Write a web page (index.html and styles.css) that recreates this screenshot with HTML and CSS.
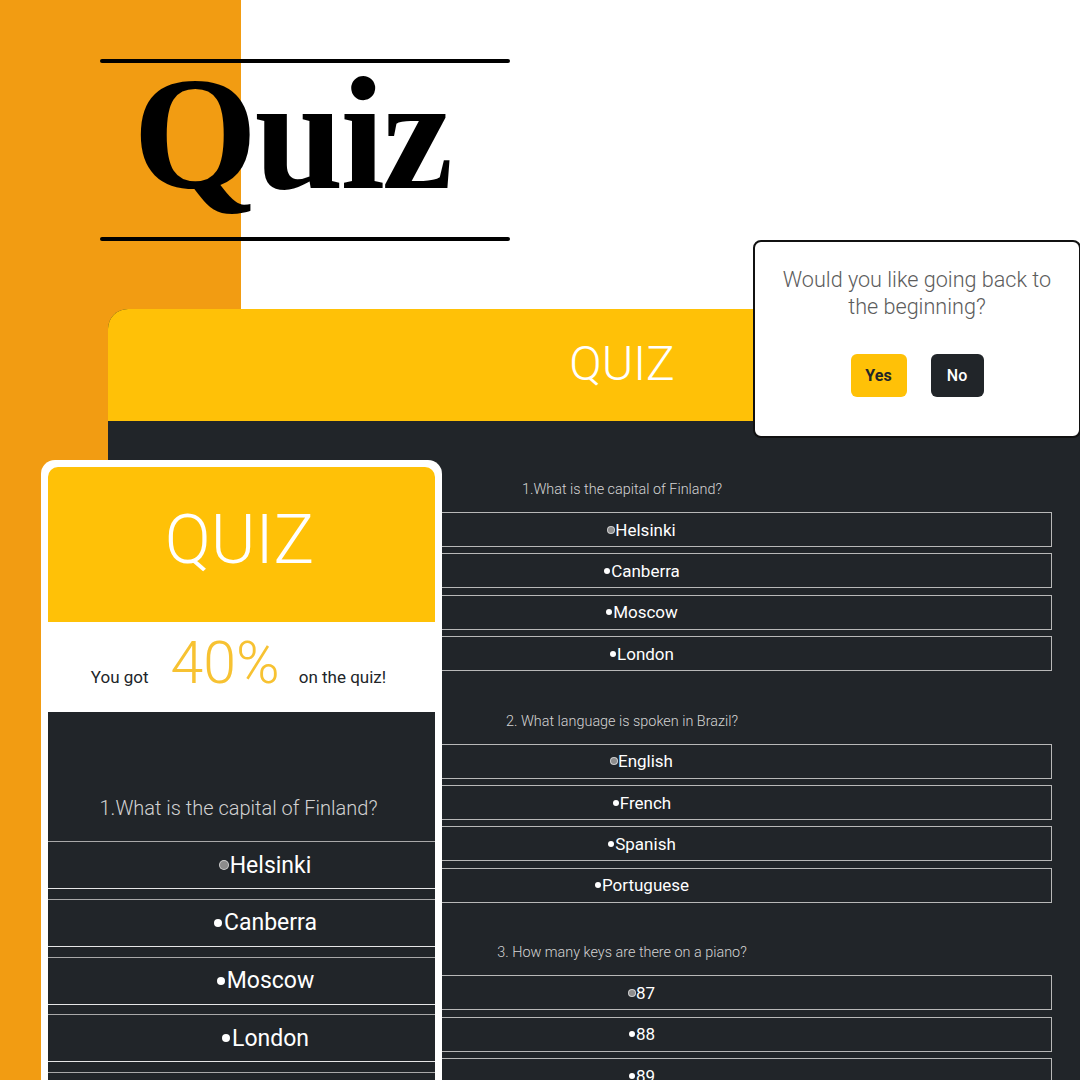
FILE: index.html
```html
<!DOCTYPE html>
<html lang="en">
<head>
<meta charset="utf-8">
<title>Quiz</title>
<link rel="stylesheet" href="styles.css">
</head>
<body>
<div class="stage">
  <header class="brand">
    <div class="rule"></div>
    <h1 class="brand-title">Quiz</h1>
    <div class="rule"></div>
  </header>

  <section class="desktop">
    <div class="desktop-head">QUIZ</div>
    <div class="desktop-body">
      <div class="qblock">
        <p class="q">1.What is the capital of Finland?</p>
        <ul class="opts">
          <li class="opt"><span class="dot dot-focus"></span>Helsinki</li>
          <li class="opt"><span class="dot"></span>Canberra</li>
          <li class="opt"><span class="dot"></span>Moscow</li>
          <li class="opt"><span class="dot"></span>London</li>
        </ul>
      </div>
      <div class="qblock">
        <p class="q">2. What language is spoken in Brazil?</p>
        <ul class="opts">
          <li class="opt"><span class="dot dot-focus"></span>English</li>
          <li class="opt"><span class="dot"></span>French</li>
          <li class="opt"><span class="dot"></span>Spanish</li>
          <li class="opt"><span class="dot"></span>Portuguese</li>
        </ul>
      </div>
      <div class="qblock">
        <p class="q">3. How many keys are there on a piano?</p>
        <ul class="opts">
          <li class="opt"><span class="dot dot-focus"></span>87</li>
          <li class="opt"><span class="dot"></span>88</li>
          <li class="opt"><span class="dot"></span>89</li>
        </ul>
      </div>
    </div>
  </section>

  <section class="phone">
    <div class="phone-head">QUIZ</div>
    <div class="score">
      <span class="score-text">You got</span>
      <span class="score-num">40%</span>
      <span class="score-text score-after">on the quiz!</span>
    </div>
    <div class="phone-body">
      <p class="pq">1.What is the capital of Finland?</p>
      <ul class="popts">
        <li class="popt"><span class="pdot pdot-focus"></span>Helsinki</li>
        <li class="popt"><span class="pdot"></span>Canberra</li>
        <li class="popt"><span class="pdot"></span>Moscow</li>
        <li class="popt"><span class="pdot"></span>London</li>
        <li class="popt"></li>
      </ul>
    </div>
  </section>

  <div class="dialog">
    <p class="dialog-text">Would you like going back to<br>the beginning?</p>
    <div class="dialog-actions">
      <button class="btn btn-yes">Yes</button>
      <button class="btn btn-no">No</button>
    </div>
  </div>
</div>
</body>
</html>
```

FILE: styles.css
```css
* {
  box-sizing: border-box;
  margin: 0;
  padding: 0;
}

html, body {
  width: 1080px;
  height: 1080px;
  overflow: hidden;
}

body {
  background: #ffffff;
  font-family: Roboto, "Open Sans", sans-serif;
}

.stage {
  position: relative;
  width: 1080px;
  height: 1080px;
  overflow: hidden;
  background: linear-gradient(to right, #f29c12 0, #f29c12 241px, #ffffff 241px);
}

/* Title */
.brand {
  position: absolute;
  left: 100px;
  top: 59px;
  width: 410px;
  display: flex;
  flex-direction: column;
}

.rule {
  height: 4px;
  background: #000;
  border-radius: 2px;
}

.brand-title {
  font-family: "Liberation Serif", "DejaVu Serif", serif;
  font-weight: 700;
  font-size: 160px;
  line-height: 142px;
  height: 174px;
  padding-left: 33px;
  letter-spacing: -3px;
  color: #000;
}

/* Desktop card */
.desktop {
  position: absolute;
  left: 108px;
  top: 309px;
  width: 1028px;
  height: 800px;
  border-radius: 20px 20px 0 0;
  overflow: hidden;
  background: #212529;
}

.desktop-head {
  height: 112px;
  background: #ffc107;
  color: #ffffff;
  display: flex;
  align-items: center;
  justify-content: center;
  font-weight: 300;
  font-size: 48px;
  padding-bottom: 4px;
}

.desktop-body {
  padding-top: 58px;
}

.qblock + .qblock {
  margin-top: 39.5px;
}

.q {
  text-align: center;
  font-size: 14.4px;
  font-weight: 300;
  line-height: 22px;
  color: #d4d4d4;
  margin-bottom: 11px;
}

.opts {
  list-style: none;
  margin: 0 84px 0 124px;
  display: flex;
  flex-direction: column;
  gap: 6.4px;
}

.opt {
  height: 35px;
  border: 1px solid #b8b8b8;
  display: flex;
  align-items: center;
  justify-content: center;
  color: #ffffff;
  font-size: 17px;
}

.dot {
  display: inline-block;
  width: 6px;
  height: 6px;
  border-radius: 50%;
  background: #ffffff;
  margin-right: 1px;
}

.dot-focus {
  background: #8c8c8c;
  box-shadow: 0 0 0 1px #cfcfcf;
}

/* Phone card */
.phone {
  position: absolute;
  left: 41px;
  top: 460px;
  width: 401px;
  height: 660px;
  background: #ffffff;
  border-radius: 14px;
  padding: 7px;
}

.phone-head {
  height: 155px;
  background: #ffc107;
  border-radius: 10px 10px 0 0;
  display: flex;
  align-items: center;
  justify-content: center;
  color: #ffffff;
  font-weight: 300;
  font-size: 68px;
  padding-bottom: 9px;
  padding-right: 4px;
}

.score {
  height: 90px;
  padding-top: 11px;
  padding-right: 6px;
  display: flex;
  justify-content: center;
  align-items: baseline;
  background: #ffffff;
}

.score-text {
  font-size: 17px;
  color: #212529;
}

.score-num {
  font-size: 59px;
  line-height: 60px;
  font-weight: 300;
  color: #f7c232;
  margin: 0 19px 0 22px;
}

.phone-body {
  background: #212529;
  padding-top: 82px;
  height: 470px;
}

.pq {
  text-align: center;
  font-size: 20px;
  font-weight: 300;
  line-height: 28px;
  color: #d2d2d2;
  margin-bottom: 19px;
  padding-right: 6px;
}

.popts {
  list-style: none;
  display: flex;
  flex-direction: column;
  gap: 9.75px;
}

.popt {
  height: 48px;
  border-top: 1px solid #a9a9a9;
  border-bottom: 1px solid #e6e6e6;
  display: flex;
  align-items: center;
  justify-content: center;
  padding-left: 48px;
  color: #ffffff;
  font-size: 23px;
}

.pdot {
  display: inline-block;
  width: 8px;
  height: 8px;
  border-radius: 50%;
  background: #ffffff;
  margin-right: 2px;
}

.pdot-focus {
  background: #8c8c8c;
  box-shadow: 0 0 0 1px #cfcfcf;
}

/* Dialog */
.dialog {
  position: absolute;
  left: 753px;
  top: 240px;
  width: 328px;
  height: 198px;
  background: #ffffff;
  border: 2px solid #111111;
  border-radius: 8px;
  display: flex;
  flex-direction: column;
  align-items: center;
  padding-top: 24px;
}

.dialog-text {
  font-size: 21.6px;
  font-weight: 300;
  line-height: 27px;
  color: #5c5c5c;
  text-align: center;
}

.dialog-actions {
  display: flex;
  gap: 24px;
  margin-top: 34px;
}

.btn {
  height: 43px;
  border: none;
  border-radius: 6px;
  font-family: Roboto, "Open Sans", sans-serif;
  font-size: 16px;
  font-weight: 700;
  display: flex;
  align-items: center;
  justify-content: center;
}

.btn-yes {
  width: 56px;
  background: #ffc107;
  color: #212529;
}

.btn-no {
  width: 53px;
  background: #212529;
  color: #ffffff;
  font-weight: 500;
}
```
